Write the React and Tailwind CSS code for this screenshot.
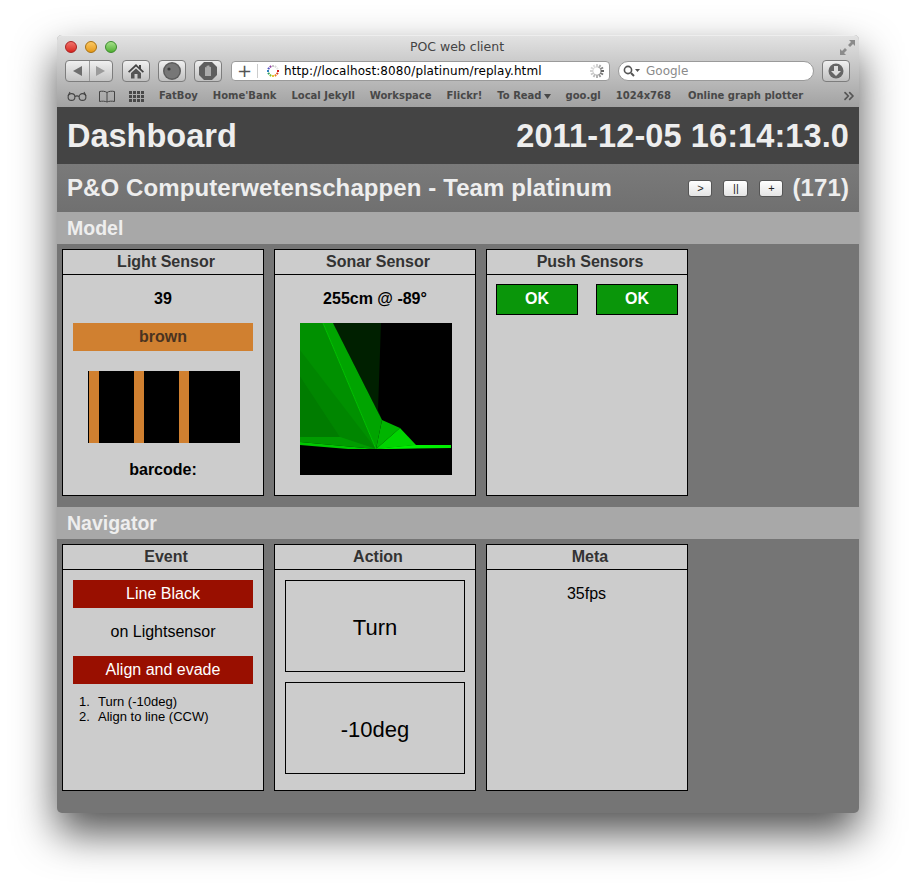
import { Fragment } from "react";
import { ChevronsRight } from "lucide-react";

const uiFont = "font-['DejaVu_Sans',sans-serif]";

const bookmarks = ["FatBoy", "Home'Bank", "Local Jekyll", "Workspace", "Flickr!"];

const ToolButton = ({ children, className = "" }) => (
  <div
    className={`flex h-[22px] w-[28px] shrink-0 items-center justify-center rounded-[4px] border border-[#7d7d7d] bg-gradient-to-b from-[#f0f0f0] to-[#c0c0c0] ${className}`}
  >
    {children}
  </div>
);

const Spinner = ({ x, y, r1, r2, colors }) => (
  <svg width="18" height="18" viewBox="0 0 18 18" className="shrink-0">
    {colors.map((color, i) => {
      const a = (i / colors.length) * Math.PI * 2;
      return (
        <line
          key={i}
          x1={x + Math.cos(a) * r1}
          y1={y + Math.sin(a) * r1}
          x2={x + Math.cos(a) * r2}
          y2={y + Math.sin(a) * r2}
          stroke={color}
          strokeWidth="1.8"
        />
      );
    })}
  </svg>
);

const Toolbar = () => (
  <div className={`h-[72px] rounded-t-[5px] border-t border-[#eeeeee] bg-gradient-to-b from-[#e2e2e2] to-[#a2a2a2] ${uiFont}`}>
    {/* Title row */}
    <div className="flex h-[22px] items-center pl-[8px] pr-[4px]">
      <div className="flex w-[60px] gap-[8px]">
        <span className="h-3 w-3 rounded-full border border-[#a82020] bg-gradient-to-b from-[#f0706a] to-[#d8201c]" />
        <span className="h-3 w-3 rounded-full border border-[#a87010] bg-gradient-to-b from-[#fbc860] to-[#e69a10]" />
        <span className="h-3 w-3 rounded-full border border-[#3a8a2a] bg-gradient-to-b from-[#a4e088] to-[#50b030]" />
      </div>
      <div className="flex-1 pr-[51px] text-center text-[12.5px] leading-none text-[#444444]">POC web client</div>
      <svg width="15" height="15" viewBox="0 0 15 15" className="shrink-0 text-[#8b8b8b]" fill="currentColor">
        <path d="M9 0h6v6l-2-2-3 3-2-2 3-3zM0 15V9l2 2 3-3 2 2-3 3 2 2z" />
      </svg>
    </div>

    {/* Button row */}
    <div className="mt-[2px] flex h-[22px] items-center pl-[8px]">
      <div className="flex h-[22px] w-[48px] shrink-0 items-center rounded-[4px] border border-[#7d7d7d] bg-gradient-to-b from-[#f0f0f0] to-[#c4c4c4]">
        <div className="flex h-full flex-1 items-center justify-center border-r border-[#9a9a9a]">
          <svg width="9" height="10" viewBox="0 0 9 10"><path d="M9 0v10L0 5z" fill="#6e6e6e" /></svg>
        </div>
        <div className="flex h-full flex-1 items-center justify-center">
          <svg width="9" height="10" viewBox="0 0 9 10"><path d="M0 0v10l9-5z" fill="#9b9b9b" /></svg>
        </div>
      </div>
      <ToolButton className="ml-[9px]">
        <svg width="16" height="15" viewBox="0 0 16 15">
          <path d="M8 0L0 7.5l1.2 1.2L8 2.5l6.8 6.2L16 7.5l-3-2.8V1h-2v1.9z" fill="#444444" />
          <path d="M3 9l5-4.6L13 9v5.5H9.5V10h-3v4.5H3z" fill="#555555" />
        </svg>
      </ToolButton>
      <ToolButton className="ml-[8px]">
        <svg width="20" height="20" viewBox="0 0 20 20">
          <circle cx="10" cy="10" r="9" fill="#5c5c5c" />
          <circle cx="10" cy="10" r="7.5" fill="#777777" />
          <circle cx="7" cy="8" r="1.6" fill="#3c3c3c" />
        </svg>
      </ToolButton>
      <ToolButton className="ml-[8px]">
        <svg width="20" height="20" viewBox="0 0 20 20">
          <path d="M6 1h8l5 5v8l-5 5H6l-5-5V6z" fill="#5e5e5e" />
          <path d="M7 15V6.5a1 1 0 0 1 1.5 0V5a1 1 0 0 1 1.5 0v-.2a1 1 0 0 1 1.5 0V6a1 1 0 0 1 1.5.2V15z" fill="#aaaaaa" />
        </svg>
      </ToolButton>
      <div className="ml-[9px] flex h-[20px] w-[379px] shrink-0 items-center rounded-[4px] border border-[#9a9a9a] bg-white">
        <span className="w-[25px] text-center text-[18px] leading-none text-[#555555]">+</span>
        <span className="h-[14px] border-l border-[#cccccc]" />
        <div className="ml-[6px] mr-[2px]">
          <Spinner x={9} y={9} r1={4} r2={6} colors={["#d02020", "#e04020", "#e88020", "#e8c020", "#80c030", "#30a060", "#3080c0", "#5050c0", "#9040a0", "#c0c0c0", "#d8d8d8", "#e8e8e8"]} />
        </div>
        <span className="flex-1 text-[12px] leading-none tracking-[0.1px] text-black">http://localhost:8080/platinum/replay.html</span>
        <div className="mr-[3px]">
          <Spinner x={9} y={9} r1={3.5} r2={7} colors={["#555555", "#777777", "#999999", "#aaaaaa", "#bbbbbb", "#c8c8c8", "#d0d0d0", "#d8d8d8", "#dddddd", "#cccccc", "#aaaaaa", "#888888"]} />
        </div>
      </div>
      <div className="ml-[8px] flex h-[20px] w-[196px] shrink-0 items-center rounded-full border border-[#9a9a9a] bg-white pl-[4px]">
        <svg width="18" height="12" viewBox="0 0 18 12" className="shrink-0" fill="none">
          <circle cx="5" cy="5" r="3.6" stroke="#555555" strokeWidth="1.6" />
          <path d="M8 8l3 3" stroke="#555555" strokeWidth="2" />
          <path d="M12 4h5l-2.5 3z" fill="#555555" />
        </svg>
        <span className="ml-[5px] text-[12px] leading-none text-[#8a8a8a]">Google</span>
      </div>
      <ToolButton className="ml-[8px]">
        <svg width="16" height="16" viewBox="0 0 16 16">
          <circle cx="8" cy="8" r="7.5" fill="#666666" />
          <path d="M6 3h4v5h3l-5 5-5-5h3z" fill="#dddddd" />
        </svg>
      </ToolButton>
    </div>

    {/* Bookmarks row */}
    <div className="mt-[4px] flex h-[20px] items-center pl-[10px] text-[10px] font-bold leading-none text-[#484848]">
      <svg width="20" height="10" viewBox="0 0 20 10" fill="none" stroke="#444444" strokeWidth="1.1" className="shrink-0">
        <circle cx="4.5" cy="6" r="3.4" />
        <circle cx="15.5" cy="6" r="3.4" />
        <path d="M8 5.5c1.2-.8 2.8-.8 4 0M1 5l2-4M19 5l-2-4" />
      </svg>
      <svg width="18" height="13" viewBox="0 0 18 13" fill="none" stroke="#444444" strokeWidth="1" className="ml-[11px] shrink-0">
        <path d="M9 2.5C7 1 4 1 1.5 1.5v10C4 11 7 11 9 12c2-1 5-1 7.5-.5v-10C14 1 11 1 9 2.5zM9 2.5V12" />
      </svg>
      <div className="ml-[13px] grid shrink-0 grid-cols-4 gap-[1px]">
        {Array.from({ length: 12 }, (_, i) => (
          <span key={i} className="h-[3px] w-[3px] bg-[#484848]" />
        ))}
      </div>
      <div className="ml-[15px] flex items-center gap-[15px] whitespace-nowrap">
        {bookmarks.map((b) => (
          <span key={b}>{b}</span>
        ))}
        <span className="flex items-center gap-[2px]">
          To Read
          <svg width="7" height="5" viewBox="0 0 7 5"><path d="M0 0h7L3.5 5z" fill="#484848" /></svg>
        </span>
        <span>goo.gl</span>
        <span>1024x768</span>
        <span className="ml-[2px]">Online graph plotter</span>
      </div>
      <ChevronsRight size={16} strokeWidth={2.6} className="ml-auto mr-[2px] text-[#555555]" />
    </div>
  </div>
);

const Card = ({ title, children }) => (
  <div className="flex h-[247px] w-[202px] flex-col border border-black bg-[#cccccc]">
    <div className="h-[25px] border-b border-black pl-[6px] text-center text-[16px] font-bold leading-[24px] text-[#333333]">{title}</div>
    <div className="flex-1 text-center text-black">{children}</div>
  </div>
);

const Section = ({ title, children }) => (
  <Fragment>
    <div className="h-[32px] bg-[#a8a8a8] pl-[10px] text-[19.5px] font-bold leading-[33px] text-[#eeeeee]">{title}</div>
    <div className="flex gap-[10px] pl-[5px] pt-[5px]">{children}</div>
  </Fragment>
);

const SmallButton = ({ children, className = "" }) => (
  <button className={`flex h-[17px] w-[24px] items-center justify-center rounded-[3px] border border-[#555555] bg-gradient-to-b from-white to-[#e4e4e4] text-[11px] font-normal leading-none text-[#222222] ${className}`}>
    {children}
  </button>
);

const SonarChart = () => (
  <svg width="152" height="152" viewBox="0 0 152 152" className="block">
    <rect width="152" height="152" fill="#000000" />
    <polygon points="33,0 81,0 78,87 82,97" fill="#002000" />
    <polygon points="0,0 23,0 76,126 0,114" fill="#009000" />
    <polygon points="0,27 76,126 40,114 0,53" fill="#008600" />
    <polygon points="0,53 40,114 0,114" fill="#007c00" />
    <polygon points="23,0 33,0 82,97 76,126" fill="#00a400" />
    <line x1="23" y1="0" x2="76" y2="126" stroke="#00c400" strokeWidth="1" />
    <polygon points="82,97 100,105 76,126" fill="#00b400" />
    <polygon points="100,105 116,122 76,126" fill="#00d400" />
    <polygon points="116,122 118,125 76,126" fill="#00e800" />
    <polygon points="0,114 40,114 76,126 0,119" fill="#009c00" />
    <polygon points="0,119 76,126 48,126 0,122" fill="#00c800" />
    <polygon points="116,122 151,122 151,125 76,126" fill="#00f000" />
  </svg>
);

export default function App() {
  return (
    <div className="h-[892px] w-[915px] overflow-hidden bg-white pl-[57px] pt-[35px] font-['Liberation_Sans',Arial,sans-serif]">
      <div className="h-[778px] w-[802px] rounded-[5px] bg-[#757575] shadow-[0_20px_42px_rgba(0,0,0,0.68)]">
        <Toolbar />

        {/* Page header */}
        <div className="flex h-[57px] items-center justify-between bg-[#444444] px-[10px] pt-[2px] text-[32.5px] font-bold leading-none text-[#eeeeee]">
          <span>Dashboard</span>
          <span className="tracking-[0.1px]">2011-12-05 16:14:13.0</span>
        </div>
        <div className="flex h-[48px] items-center bg-gradient-to-b from-[#7a7a7a] to-[#707070] px-[10px] text-[24px] font-bold leading-none tracking-[0.1px] text-[#eeeeee]">
          <span>P&amp;O Computerwetenschappen - Team platinum</span>
          <div className="ml-auto flex items-center">
            <SmallButton>&gt;</SmallButton>
            <SmallButton className="ml-[11px] w-[25px]">||</SmallButton>
            <SmallButton className="ml-[11px]">+</SmallButton>
            <span className="ml-[9px]">(171)</span>
          </div>
        </div>

        <Section title="Model">
          <Card title="Light Sensor">
            <div className="pt-[15px] text-[16px] font-bold leading-[18px]">39</div>
            <div className="mx-[10px] mt-[15px] h-[28px] bg-[#d08030] text-[16px] font-bold leading-[27px] text-[#4a3320]">brown</div>
            <div className="ml-[25px] mt-[20px] flex h-[72px] w-[152px] bg-black pl-[1px]">
              <span className="h-full w-[10px] bg-[#d08030]" />
              <span className="ml-[35px] h-full w-[10px] bg-[#d08030]" />
              <span className="ml-[35px] h-full w-[10px] bg-[#d08030]" />
            </div>
            <div className="pt-[18px] text-[16px] font-bold leading-[18px]">barcode:</div>
          </Card>
          <Card title="Sonar Sensor">
            <div className="pt-[15px] text-[16px] font-bold leading-[18px]">255cm @ -89°</div>
            <div className="ml-[25px] mt-[15px]">
              <SonarChart />
            </div>
          </Card>
          <Card title="Push Sensors">
            <div className="flex gap-[18px] px-[9px] pt-[9px]">
              <div className="h-[31px] w-[82px] border border-black bg-[#0a960a] text-[16px] font-bold leading-[27px] text-white">OK</div>
              <div className="h-[31px] w-[82px] border border-black bg-[#0a960a] text-[16px] font-bold leading-[27px] text-white">OK</div>
            </div>
          </Card>
        </Section>

        <div className="h-[11px]" />

        <Section title="Navigator">
          <Card title="Event">
            <div className="mx-[10px] mt-[10px] h-[28px] bg-[#990f00] text-[16px] leading-[27px] text-white">Line Black</div>
            <div className="pt-[15px] text-[16px] leading-[18px]">on Lightsensor</div>
            <div className="mx-[10px] mt-[15px] h-[28px] bg-[#990f00] text-[16px] leading-[27px] text-white">Align and evade</div>
            <ol className="pl-[16px] pt-[10px] text-left text-[13px] leading-[15px]">
              <li className="flex"><span className="w-[19px]">1.</span>Turn (-10deg)</li>
              <li className="flex"><span className="w-[19px]">2.</span>Align to line (CCW)</li>
            </ol>
          </Card>
          <Card title="Action">
            <div className="mx-[10px] mt-[10px] flex h-[92px] items-center justify-center border border-black pt-[3px] text-[22px]">Turn</div>
            <div className="mx-[10px] mt-[10px] flex h-[92px] items-center justify-center border border-black pt-[3px] text-[22px]">-10deg</div>
          </Card>
          <Card title="Meta">
            <div className="pt-[15px] pr-[1px] text-[16px] leading-[18px]">35fps</div>
          </Card>
        </Section>
      </div>
    </div>
  );
}
